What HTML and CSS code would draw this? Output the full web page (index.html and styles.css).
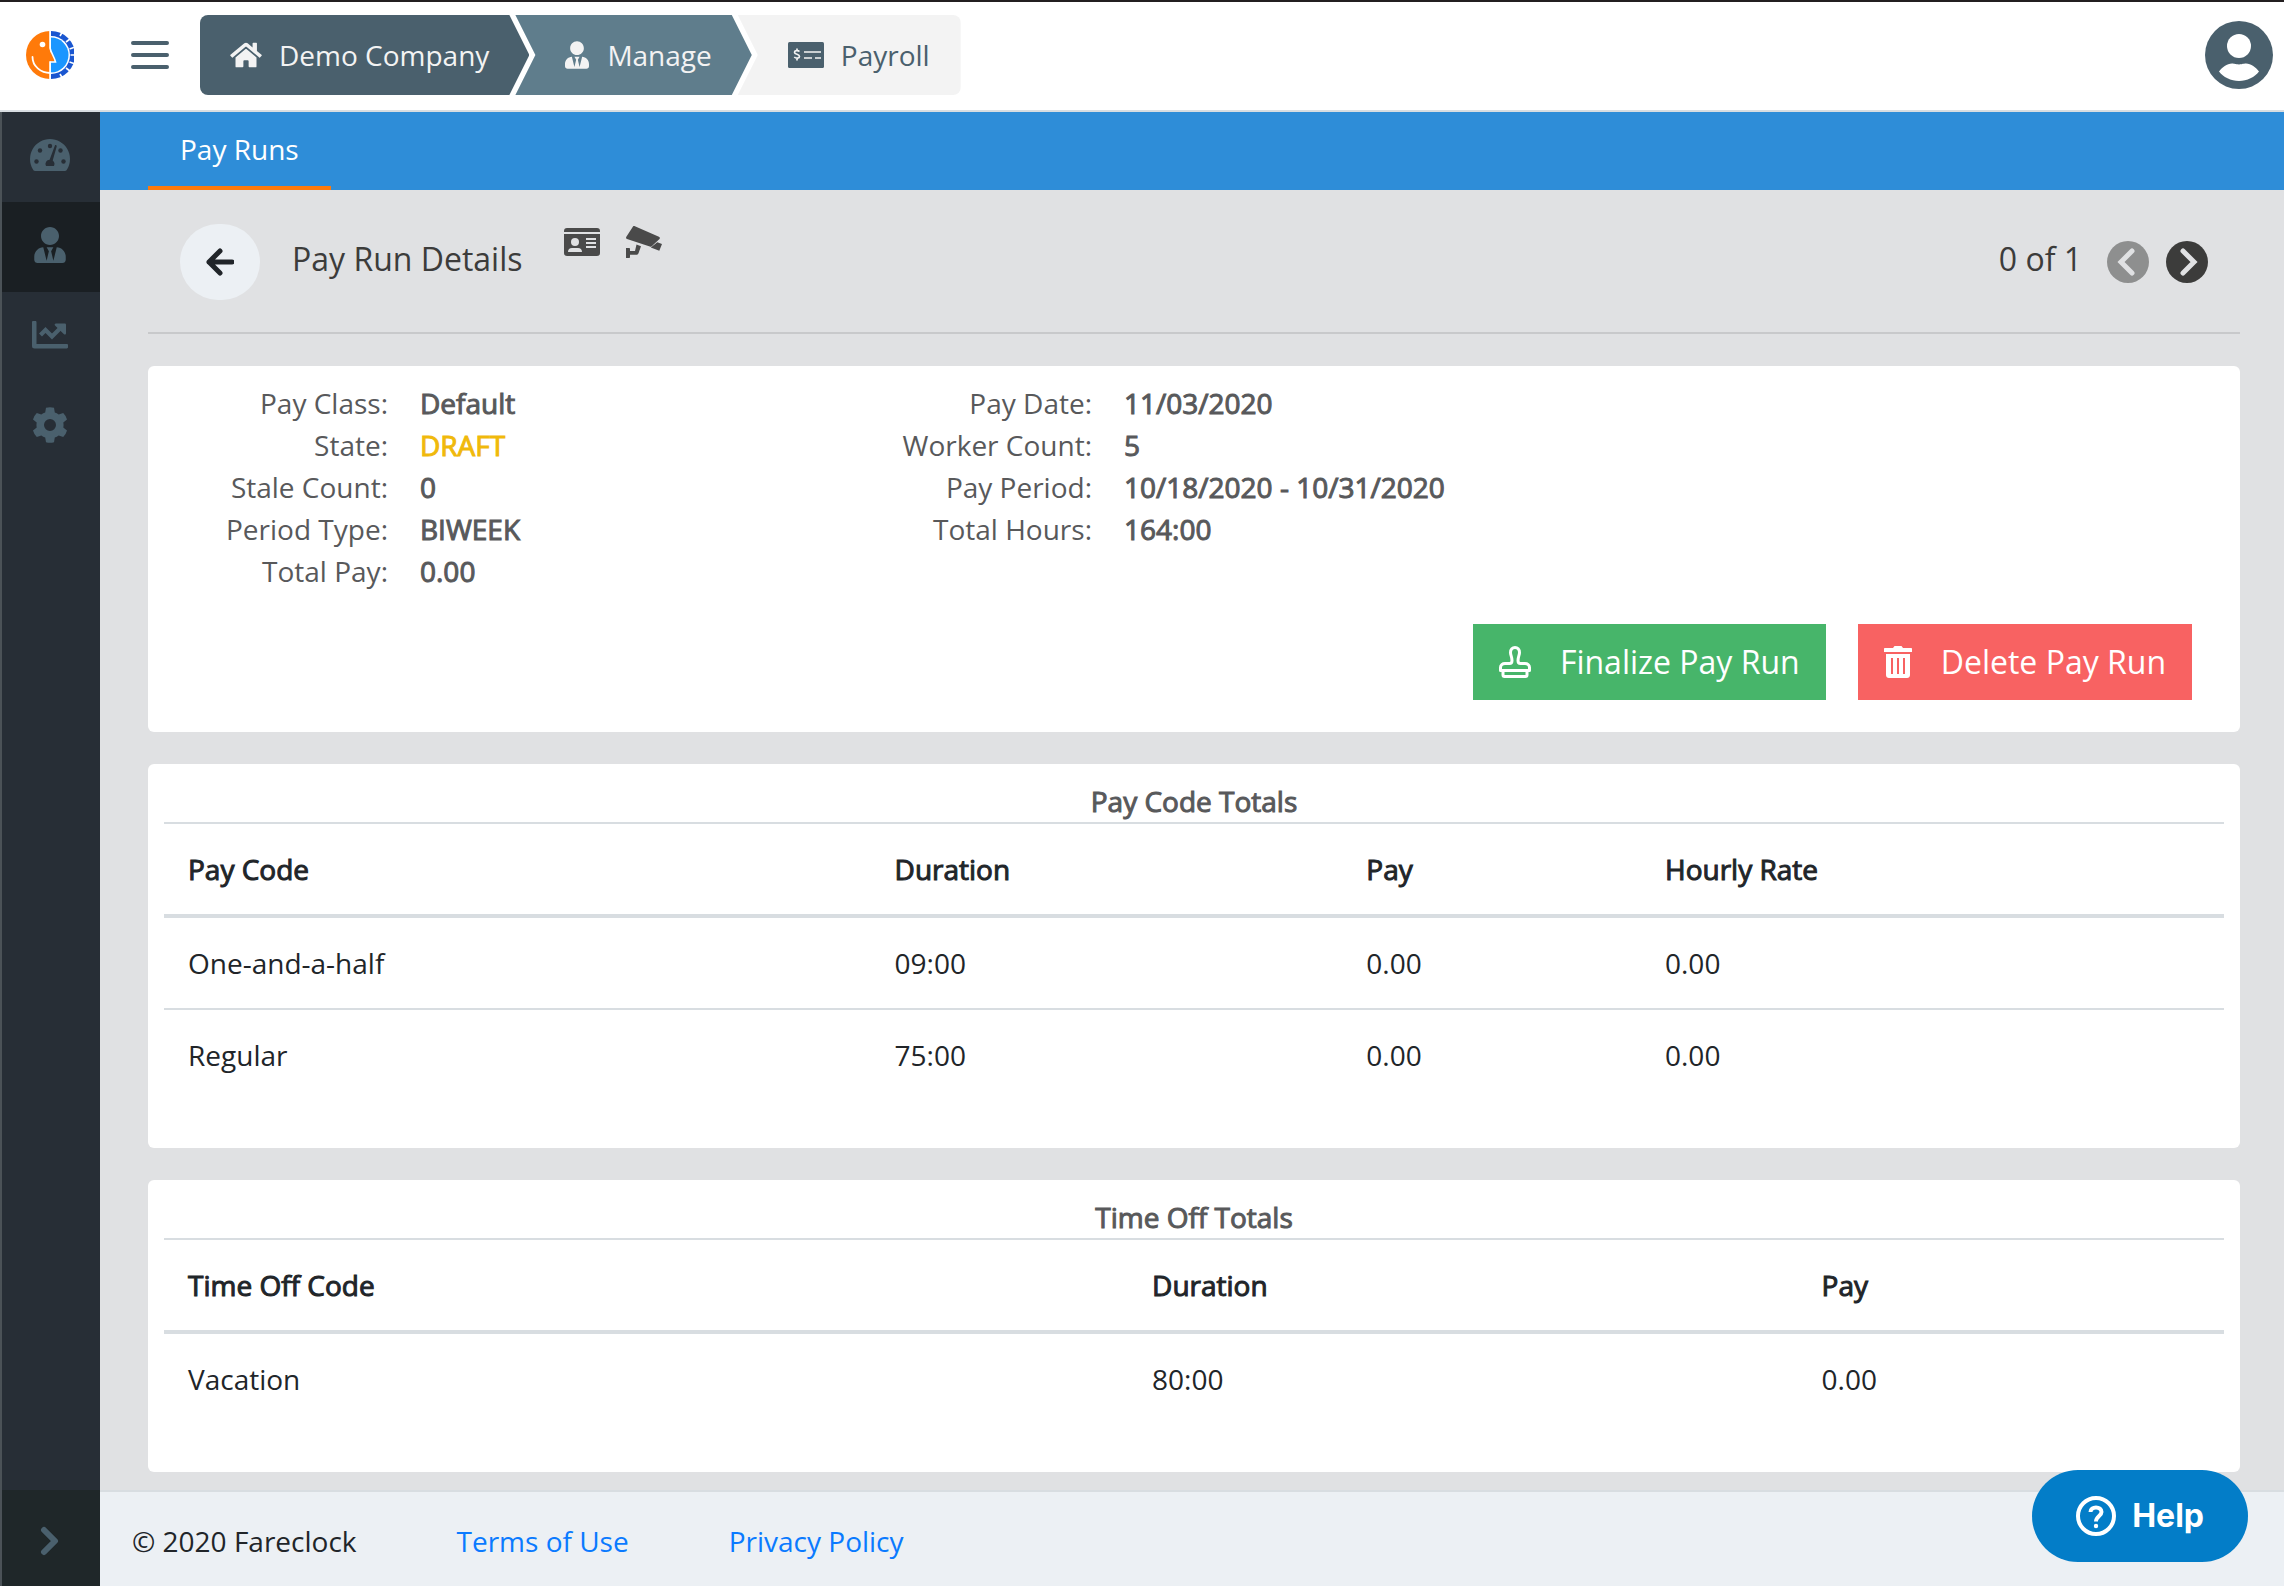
FILE: index.html
```html
<!doctype html>
<html lang="en">
<head>
  <meta charset="utf-8">
  <title>Pay Run Details</title>
  <link rel="stylesheet" href="styles.css">
</head>
<body>

  <!-- shared icons -->
  <svg class="sprite" aria-hidden="true">
    <symbol id="user-tie" viewBox="0 0 448 512">
      <path d="M224 256c70.700 0 128-57.300 128-128S294.700 0 224 0 96 57.300 96 128s57.300 128 128 128zm95.800 32.600L272 480l-32-136 32-56h-96l32 56-32 136-47.800-191.400C56.900 292 0 350.300 0 422.400V464c0 26.500 21.500 48 48 48h352c26.500 0 48-21.500 48-48v-41.600c0-72.100-56.900-130.400-128.200-133.800z"/>
    </symbol>
    <symbol id="chevron-right" viewBox="0 0 20 30">
      <path d="M4 4l11 11L4 26" fill="none" stroke="currentColor" stroke-width="6" stroke-linejoin="round" stroke-linecap="round"/>
    </symbol>
  </svg>

  <header class="topbar">
    <a class="logo" href="#" aria-label="Fareclock">
      <svg viewBox="0 0 48 48" width="48" height="48">
        <path d="M24 0a24 24 0 0 0 0 48z" fill="#ff7a0a"/>
        <path d="M25 0a24 24 0 0 1 0 48z" fill="#1a56d0"/>
        <path d="M34 5l2-3.500M40 11l4-3M43.500 18l4.500-1.500M44.500 24H48M43.500 31l4.500 1.500M40 37l4 3M34 43l2 3.500" stroke="#fff" stroke-width="1.600"/>
        <path d="M25 5a19 19 0 0 1 0 38z" fill="#fff"/>
        <path d="M25 6.500a17.500 17.500 0 0 1 0 35z" fill="#1b96ff"/>
        <path d="M23.500 0v17.500c1 5 4 8 5.500 13H23.500z" fill="#ff7a0a"/>
        <path d="M24 0v17c1 5 4.500 9 5.500 14H24v17" fill="none" stroke="#fff" stroke-width="1.600"/>
        <circle cx="16.500" cy="13.500" r="2.800" fill="#fff"/>
        <path d="M6.500 26c0 9 8 16 18 16" fill="none" stroke="#fff" stroke-width="1.800" stroke-linecap="round"/>
      </svg>
    </a>
    <button class="menu" aria-label="Menu">
      <svg viewBox="0 0 38 28" width="38" height="28"><path d="M2 2h34M2 14h34M2 26h34" stroke="currentColor" stroke-width="4" stroke-linecap="round"/></svg>
    </button>

    <nav class="crumbs">
      <a class="crumb crumb-company" href="#">
        <svg viewBox="0 0 576 512" width="32" height="28" fill="currentColor"><path d="M280.400 148.300L96 300.100V464a16 16 0 0 0 16 16l112.100-.3a16 16 0 0 0 15.900-16V368a16 16 0 0 1 16-16h64a16 16 0 0 1 16 16v95.600a16 16 0 0 0 16 16.100L464 480a16 16 0 0 0 16-16V300L295.700 148.300a12.200 12.200 0 0 0-15.300 0zM571.600 251.500L488 182.600V44a12 12 0 0 0-12-12h-56a12 12 0 0 0-12 12v72.600L318.500 43a48 48 0 0 0-61 0L4.300 251.500a12 12 0 0 0-1.600 16.900l25.500 31a12 12 0 0 0 16.900 1.600l235.200-193.700a12.200 12.200 0 0 1 15.300 0L530.900 301a12 12 0 0 0 16.900-1.600l25.500-31a12 12 0 0 0-1.700-16.900z"/></svg>
        Demo Company
      </a>
      <a class="crumb crumb-manage" href="#">
        <svg width="24" height="28" fill="currentColor"><use href="#user-tie"/></svg>
        Manage
      </a>
      <a class="crumb crumb-payroll" href="#">
        <svg viewBox="0 0 36 26" width="36" height="26">
          <rect width="36" height="26" rx="1.500" fill="currentColor"/>
          <path d="M16 10h17M16 16h8M27 16h6" stroke="#f3f3f3" stroke-width="1.600"/>
          <path d="M11.500 9.500c-1.500-1.500-5-1.200-5 .7 0 2.600 5 1.500 5 4.200 0 2-3.500 2.300-5.200.6M9 6.500v2M9 16v2.500" fill="none" stroke="#f3f3f3" stroke-width="1.700"/>
        </svg>
        Payroll
      </a>
    </nav>

    <button class="avatar" aria-label="Account">
      <svg viewBox="0 0 68 68" width="68" height="68">
        <circle cx="34" cy="34" r="34" fill="currentColor"/>
        <circle cx="34" cy="25" r="12" fill="#fff"/>
        <path d="M14 50.500c3-4 8-8 13-8 3 0 3 .9 7 .9s4-.9 7-.9c5 0 10 4 13 8-4 5.500-12 9.500-20 9.500s-16-4-20-9.500z" fill="#fff"/>
      </svg>
    </button>
  </header>

  <div class="layout">
    <nav class="sidebar">
      <a class="side-item" href="#" aria-label="Dashboard">
        <svg viewBox="0 0 40 32" width="40" height="32">
          <path d="M20 0a20 20 0 0 0-17.300 30c.6 1.200 1.200 2 2.300 2h30c1.100 0 1.700-.8 2.300-2A20 20 0 0 0 20 0z" fill="currentColor"/>
          <g class="cut"><circle cx="20" cy="7" r="2.200"/><circle cx="10" cy="11.500" r="2.200"/><circle cx="30.500" cy="11.500" r="2.200"/><circle cx="6.500" cy="22.500" r="2.200"/><circle cx="33.500" cy="22.500" r="2.200"/><path d="M25 6.200c.9-.3 1.900.3 1.700 1.400l-4 14a4.500 4.500 0 0 1 1.300 5.400h-8a4.300 4.300 0 0 1 3.600-6.300z"/></g>
        </svg>
      </a>
      <a class="side-item active" href="#" aria-label="Manage">
        <svg width="32" height="36" fill="currentColor"><use href="#user-tie"/></svg>
      </a>
      <a class="side-item" href="#" aria-label="Reports">
        <svg viewBox="0 0 36 28" width="36" height="28">
          <path d="M0 1.200C0 .5.500 0 1.200 0h2.100c.7 0 1.200.5 1.200 1.200V23h30.300c.7 0 1.200.5 1.200 1.200v2.100c0 .7-.5 1.200-1.200 1.200H2.500A2.500 2.500 0 0 1 0 25z" fill="currentColor"/>
          <path d="M8.500 14l5-5 6.500 6.500 9-9" fill="none" stroke="currentColor" stroke-width="4.200"/>
          <path d="M24 2.500h8.700c.7 0 1.300.5 1.300 1.200v8.600c0 1.200-1.300 1.600-2 .9l-9-8.800c-.8-.7-.2-1.900 1-1.900z" fill="currentColor"/>
        </svg>
      </a>
      <a class="side-item" href="#" aria-label="Settings">
        <svg viewBox="0 0 36 36" width="36" height="36" fill="currentColor">
          <path fill-rule="evenodd" d="M14 .8Q18-.4 22 .8L22.800 5.500Q24.800 6.200 26.700 7.600L31.200 6Q34 8.700 35 12.500L31.300 15.600Q31.800 18 31.300 20.400L35 23.500Q34 27.300 31.200 30L26.700 28.400Q24.800 29.800 22.800 30.500L22 35.200Q18 36.400 14 35.200L13.200 30.500Q11.200 29.800 9.300 28.400L4.800 30Q2 27.300 1 23.500L4.700 20.400Q4.200 18 4.700 15.600L1 12.500Q2 8.700 4.800 6L9.300 7.600Q11.200 6.200 13.200 5.500zM18 12a6 6 0 1 0 0 12 6 6 0 0 0 0-12z"/>
        </svg>
      </a>
      <button class="side-toggle" aria-label="Expand"><svg width="20" height="30"><use href="#chevron-right"/></svg></button>
    </nav>

    <div class="page">
      <nav class="tabs"><a class="tab" href="#">Pay Runs</a></nav>

      <main class="content">
        <div class="page-head">
          <button class="back" aria-label="Back">
            <svg viewBox="0 0 28 28" width="28" height="28"><path d="M26 14H3M14 3L3 14l11 11" fill="none" stroke="currentColor" stroke-width="5" stroke-linecap="round" stroke-linejoin="round"/></svg>
          </button>
          <h1>Pay Run Details</h1>
          <div class="head-icons">
            <svg viewBox="0 0 36 28" width="36" height="28">
              <path d="M0 4V3a3 3 0 0 1 3-3h30a3 3 0 0 1 3 3v1zM0 6h36v19a3 3 0 0 1-3 3H3a3 3 0 0 1-3-3z" fill="currentColor"/>
              <circle cx="11" cy="14" r="4" fill="#e0e1e3"/>
              <path d="M4 24c0-2.500 1.500-4 4-4h6c2.500 0 4 1.500 4 4zM22 10h10v2H22zM22 14h10v2H22zM22 18h10v2H22z" fill="#e0e1e3"/>
            </svg>
            <svg viewBox="0 0 36 32" width="36" height="32" fill="currentColor">
              <path d="M7 .4c.5-.5 1.200-.5 1.900-.2l24 10.500c1 .5 1.300 1.500.6 2.300l-7.500 7c-.7.700-1.300.8-2.200.4L1 13c-.9-.4-1.200-1-.8-1.900zM36 18l-2.700 6.700-8.500-3.200 6.500-5.200zM10.500 18.500l4.500 1.800-2.500 7c-.3.900-1 1.500-2 1.500H4V31c0 .6-.4 1-1 1H0V22h3c.6 0 1 .4 1 1v2h5z"/>
            </svg>
          </div>
          <div class="pager">
            <span>0 of 1</span>
            <button class="prev" aria-label="Previous" disabled>
              <svg viewBox="0 0 42 42" width="42" height="42"><circle cx="21" cy="21" r="21" fill="currentColor"/><path d="M25 10L14 21l11 11" fill="none" stroke="#e0e1e3" stroke-width="5" stroke-linecap="round"/></svg>
            </button>
            <button class="next" aria-label="Next">
              <svg viewBox="0 0 42 42" width="42" height="42"><circle cx="21" cy="21" r="21" fill="currentColor"/><path d="M17 10l11 11-11 11" fill="none" stroke="#e0e1e3" stroke-width="5" stroke-linecap="round"/></svg>
            </button>
          </div>
        </div>

        <section class="card">
          <div class="details">
            <dl>
              <dt>Pay Class:</dt><dd>Default</dd>
              <dt>State:</dt><dd class="draft">DRAFT</dd>
              <dt>Stale Count:</dt><dd>0</dd>
              <dt>Period Type:</dt><dd>BIWEEK</dd>
              <dt>Total Pay:</dt><dd>0.00</dd>
            </dl>
            <dl>
              <dt>Pay Date:</dt><dd>11/03/2020</dd>
              <dt>Worker Count:</dt><dd>5</dd>
              <dt>Pay Period:</dt><dd>10/18/2020 - 10/31/2020</dd>
              <dt>Total Hours:</dt><dd>164:00</dd>
            </dl>
          </div>
          <div class="actions">
            <button class="btn btn-finalize">
              <svg viewBox="0 0 32 32" width="32" height="32" fill="none" stroke="currentColor" stroke-width="3">
                <path d="M1.500 24.500v-3c0-2.500 2-4 4.500-4h4.500c2 0 2.500-1 2.500-3 0-4-1.500-5-1.500-8 0-3 2-5 4.500-5s4.500 2 4.500 5c0 3-1.500 4-1.500 8 0 2 .5 3 2.500 3H26c2.500 0 4.500 1.500 4.500 4v3zM4 24.500v4.500c0 1 .5 1.500 1.500 1.500h21c1 0 1.500-.5 1.500-1.500v-4.500" stroke-linejoin="round"/>
              </svg>
              Finalize Pay Run
            </button>
            <button class="btn btn-delete">
              <svg viewBox="0 0 28 32" width="28" height="32" fill="currentColor">
                <path fill-rule="evenodd" d="M1 2h8l1.500-2h7L19 2h8c.6 0 1 .4 1 1v3H0V3c0-.6.4-1 1-1zM2 8h24v21c0 1.700-1.300 3-3 3H5c-1.700 0-3-1.300-3-3zm5 4v16h2V12zm6 0v16h2V12zm6 0v16h2V12z"/>
              </svg>
              Delete Pay Run
            </button>
          </div>
        </section>

        <section class="card">
          <h2>Pay Code Totals</h2>
          <table class="pay-codes">
            <thead>
              <tr><th>Pay Code</th><th>Duration</th><th>Pay</th><th>Hourly Rate</th></tr>
            </thead>
            <tbody>
              <tr><td>One-and-a-half</td><td>09:00</td><td>0.00</td><td>0.00</td></tr>
              <tr><td>Regular</td><td>75:00</td><td>0.00</td><td>0.00</td></tr>
            </tbody>
          </table>
        </section>

        <section class="card">
          <h2>Time Off Totals</h2>
          <table class="time-off">
            <thead>
              <tr><th>Time Off Code</th><th>Duration</th><th>Pay</th></tr>
            </thead>
            <tbody>
              <tr><td>Vacation</td><td>80:00</td><td>0.00</td></tr>
            </tbody>
          </table>
        </section>
      </main>

      <footer class="footer">
        <span>© 2020 Fareclock</span>
        <a href="#">Terms of Use</a>
        <a href="#">Privacy Policy</a>
      </footer>
    </div>
  </div>

  <button class="help">
    <svg viewBox="0 0 40 40" width="40" height="40" fill="none" stroke="currentColor">
      <circle cx="20" cy="20" r="18" stroke-width="4"/>
      <path d="M14.500 16c0-3 2.500-4.500 5.500-4.500s5.500 1.700 5.500 4.500c0 4-5.500 4-5.500 9.500" stroke-width="4"/>
      <circle cx="20" cy="30" r="2.200" fill="currentColor" stroke="none"/>
    </svg>
    Help
  </button>

</body>
</html>
```

FILE: styles.css
```css
* {
  box-sizing: border-box;
}

body {
  display: flex;
  flex-direction: column;
  min-height: 100vh;
  margin: 0;
  border-top: 2px solid #231f20;
  background: #e0e1e3;
  color: #212529;
  font: 28px/42px "Open Sans", "Noto Sans", sans-serif;
}

a {
  color: #0a7aff;
  text-decoration: none;
}

button {
  padding: 0;
  border: 0;
  background: none;
  color: inherit;
  font: inherit;
}

svg {
  display: block;
  flex: none;
}

.sprite {
  position: absolute;
  width: 0;
  height: 0;
}

/* top bar */
.topbar {
  display: flex;
  align-items: center;
  height: 110px;
  padding: 0 11px 2px 26px;
  border-bottom: 2px solid #d8dde1;
  background: #fff;
  color: #4a606d;
}

.menu {
  margin: 0 31px 0 57px;
}

.crumbs {
  display: flex;
}

.crumb {
  display: flex;
  align-items: center;
  height: 80px;
  color: #f3f3f3;
}

.crumb-company {
  gap: 17px;
  padding: 0 40px 0 30px;
  border-radius: 8px 0 0 8px;
  background: #4a606d;
  clip-path: polygon(0 0, calc(100% - 20px) 0, 100% 50%, calc(100% - 20px) 100%, 0 100%);
}

.crumb-manage {
  gap: 18px;
  margin-left: -14px;
  padding: 0 40px 0 50px;
  background: #5f7d8c;
  clip-path: polygon(0 0, calc(100% - 20px) 0, 100% 50%, calc(100% - 20px) 100%, 0 100%, 20px 50%);
}

.crumb-payroll {
  gap: 17px;
  margin-left: -14px;
  padding: 0 31px 0 50px;
  border-radius: 0 8px 8px 0;
  background: #f3f3f3;
  color: #4a606d;
  clip-path: polygon(0 0, 100% 0, 100% 100%, 0 100%, 20px 50%);
}

.avatar {
  margin-left: auto;
}

/* sidebar */
.layout {
  display: flex;
  flex: 1;
}

.sidebar {
  display: flex;
  flex-direction: column;
  flex: none;
  width: 100px;
  border-left: 2px solid #4b5257;
  background: #272e36;
  color: #4a606d;
}

.side-item,
.side-toggle {
  display: flex;
  align-items: center;
  justify-content: center;
  height: 90px;
  padding: 0 2px 5px 0;
  color: #4a606d;
}

.side-item.active {
  background: #1a1f23;
}

.cut {
  fill: #272e36;
}

.side-toggle {
  height: 96px;
  margin-top: auto;
  padding: 6px 2px 0 0;
  background: #1f2729;
}

/* page */
.page {
  display: flex;
  flex-direction: column;
  flex: 1;
}

.tabs {
  display: flex;
  height: 78px;
  padding-left: 48px;
  background: #2e8dd8;
}

.tab {
  padding: 16px 32px;
  border-bottom: 4px solid #ff7a0a;
  color: #fff;
}

.content {
  flex: 1;
  padding: 0 44px 18px 48px;
}

.page-head {
  display: flex;
  align-items: center;
  height: 144px;
  margin-bottom: 32px;
  padding: 2px 32px 0;
  border-bottom: 2px solid #c8c9cb;
  color: #3c3c3b;
  font-size: 32px;
}

.back {
  display: flex;
  align-items: center;
  justify-content: center;
  width: 80px;
  height: 76px;
  border-radius: 40px;
  background: #ecf0f4;
  color: #212529;
}

h1 {
  margin: 0 42px 6px 32px;
  font-size: 32px;
  font-weight: 400;
}

.head-icons {
  display: flex;
  align-items: center;
  gap: 26px;
  margin-bottom: 40px;
  color: #4a4a4a;
}

.pager {
  display: flex;
  align-items: center;
  margin-left: auto;
}

.pager span {
  margin: 0 25px 6px 0;
}

.prev {
  margin-right: 17px;
  color: #8e8f8f;
}

.card {
  margin-bottom: 32px;
  padding: 16px;
  border-radius: 6px;
  background: #fff;
}

.card:last-child {
  margin-bottom: 0;
}

.details {
  display: grid;
  grid-template-columns: repeat(3, 1fr);
  gap: 20px;
  margin: 0 -16px;
}

dl {
  display: grid;
  grid-template-columns: 240px 1fr;
  align-content: start;
  column-gap: 32px;
  margin: 0;
  color: #58595b;
}

dt {
  text-align: right;
}

dd {
  margin: 0;
  white-space: nowrap;
}

/* one regular weight, thickened for emphasis */
dd,
h2,
th {
  font-weight: 400;
  -webkit-text-stroke: 1px currentColor;
}

.draft {
  color: #f0b90b;
}

.actions {
  display: flex;
  justify-content: flex-end;
  gap: 32px;
  margin: 32px 32px 16px;
}

.btn {
  display: flex;
  align-items: center;
  gap: 29px;
  height: 76px;
  padding: 0 26px;
  color: #fff;
  font-size: 32px;
}

.btn-finalize {
  background: #47b56a;
}

.btn-delete {
  background: #f86262;
}

h2 {
  margin: 0;
  color: #58595b;
  font-size: 28px;
  text-align: center;
}

table {
  width: 100%;
  margin-bottom: 32px;
  border-spacing: 0;
  table-layout: fixed;
}

th,
td {
  padding: 24px;
  border-top: 2px solid #d8dde1;
  text-align: left;
}

th {
  border-bottom: 4px solid #d8dde1;
}

tbody tr:first-child td {
  border-top: 0;
}

.pay-codes th:nth-child(1) {
  width: 34.3%;
}

.pay-codes th:nth-child(2) {
  width: 22.9%;
}

.pay-codes th:nth-child(3) {
  width: 14.5%;
}

.time-off th:nth-child(1) {
  width: 46.8%;
}

.time-off th:nth-child(2) {
  width: 32.5%;
}

.footer {
  display: flex;
  align-items: center;
  gap: 100px;
  height: 96px;
  padding: 4px 32px 0;
  border-top: 2px solid #d8dde1;
  background: #ecf0f4;
}

.help {
  position: fixed;
  right: 36px;
  bottom: 24px;
  display: flex;
  align-items: center;
  gap: 16px;
  height: 92px;
  padding: 0 44px;
  border-radius: 46px;
  background: #037dc8;
  color: #fff;
  font: 700 32px/42px Inter, sans-serif;
}
```
